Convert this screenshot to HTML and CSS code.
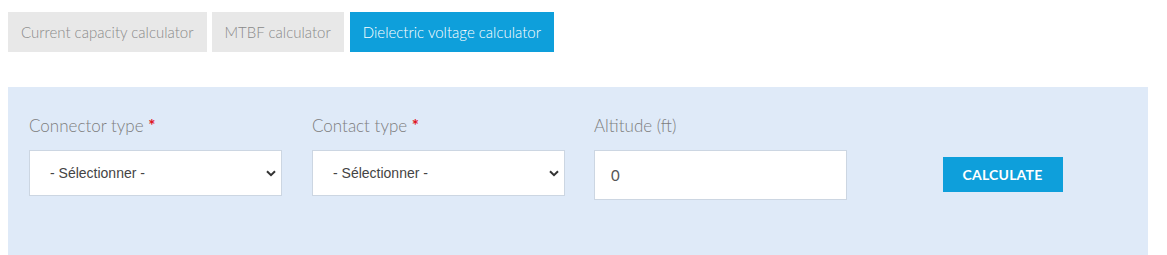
FILE: index.html
```html
<!DOCTYPE html>
<html>
<head>
<meta charset="utf-8">
<link rel="stylesheet" href="styles.css">
</head>
<body>
<div class="tabs">
  <div class="tab">Current capacity calculator</div>
  <div class="tab">MTBF calculator</div>
  <div class="tab active">Dielectric voltage calculator</div>
</div>
<div class="panel">
  <div class="field">
    <label class="label">Connector type <span class="req">*</span></label>
    <div class="select"><span>- Sélectionner -</span><svg class="chev" viewBox="0 0 10 7" width="10" height="7"><path d="M1 1.2 L5 5.2 L9 1.2" fill="none" stroke="#333" stroke-width="2"/></svg></div>
  </div>
  <div class="field">
    <label class="label">Contact type <span class="req">*</span></label>
    <div class="select"><span>- Sélectionner -</span><svg class="chev" viewBox="0 0 10 7" width="10" height="7"><path d="M1 1.2 L5 5.2 L9 1.2" fill="none" stroke="#333" stroke-width="2"/></svg></div>
  </div>
  <div class="field">
    <label class="label">Altitude (ft)</label>
    <div class="input">0</div>
  </div>
  <div class="field action">
    <div class="btn">CALCULATE</div>
  </div>
</div>
</body>
</html>
```
FILE: styles.css
```css
html, body { margin: 0; padding: 0; background: #fff; }
body { padding: 12px 19px 0 8px; font-family: Lato, "Open Sans", sans-serif; }
.tabs { display: flex; gap: 5px; height: 40px; }
.tab {
  background: #e8e8e8; color: #8a8a8a; font-size: 15px; font-weight: 300;
  padding: 0 13px; display: flex; align-items: center;
}
.tab.active { background: #0e9fdb; color: #fff; margin-left: 1px; }
.panel {
  margin-top: 35px; background: #dfeaf8; height: 168px; box-sizing: border-box;
  padding: 31px 0 0 21px; display: flex; gap: 30px;
}
.field { width: 253px; display: flex; flex-direction: column; }
.label { font-size: 17px; font-weight: 300; color: #7d7d7d; height: 34px; line-height: 20px; margin-top: -2px; box-sizing: border-box; }
.req { color: #e0141e; font-weight: 700; }
.select {
  height: 46px; background: #fff; border: 1px solid #ccd6e2; box-sizing: border-box;
  display: flex; align-items: center; justify-content: space-between;
  padding: 0 5px 0 20px; font-family: "Liberation Sans", Arial, sans-serif; font-size: 14px; color: #444;
}
.chev { margin-top: 1px; }
.input {
  height: 50px; background: #fff; border: 1px solid #ccd6e2; box-sizing: border-box;
  display: flex; align-items: center; padding-left: 16px; font-size: 15px; color: #555;
}
.field:nth-child(3) { margin-left: -1px; }
.action { align-items: center; padding-top: 39px; margin-left: -1px; }
.btn {
  width: 120px; height: 35px; background: #0e9fdb; color: #fff; font-weight: 700;
  font-size: 14px; display: flex; align-items: center; justify-content: center; letter-spacing: 0.2px;
}
```
